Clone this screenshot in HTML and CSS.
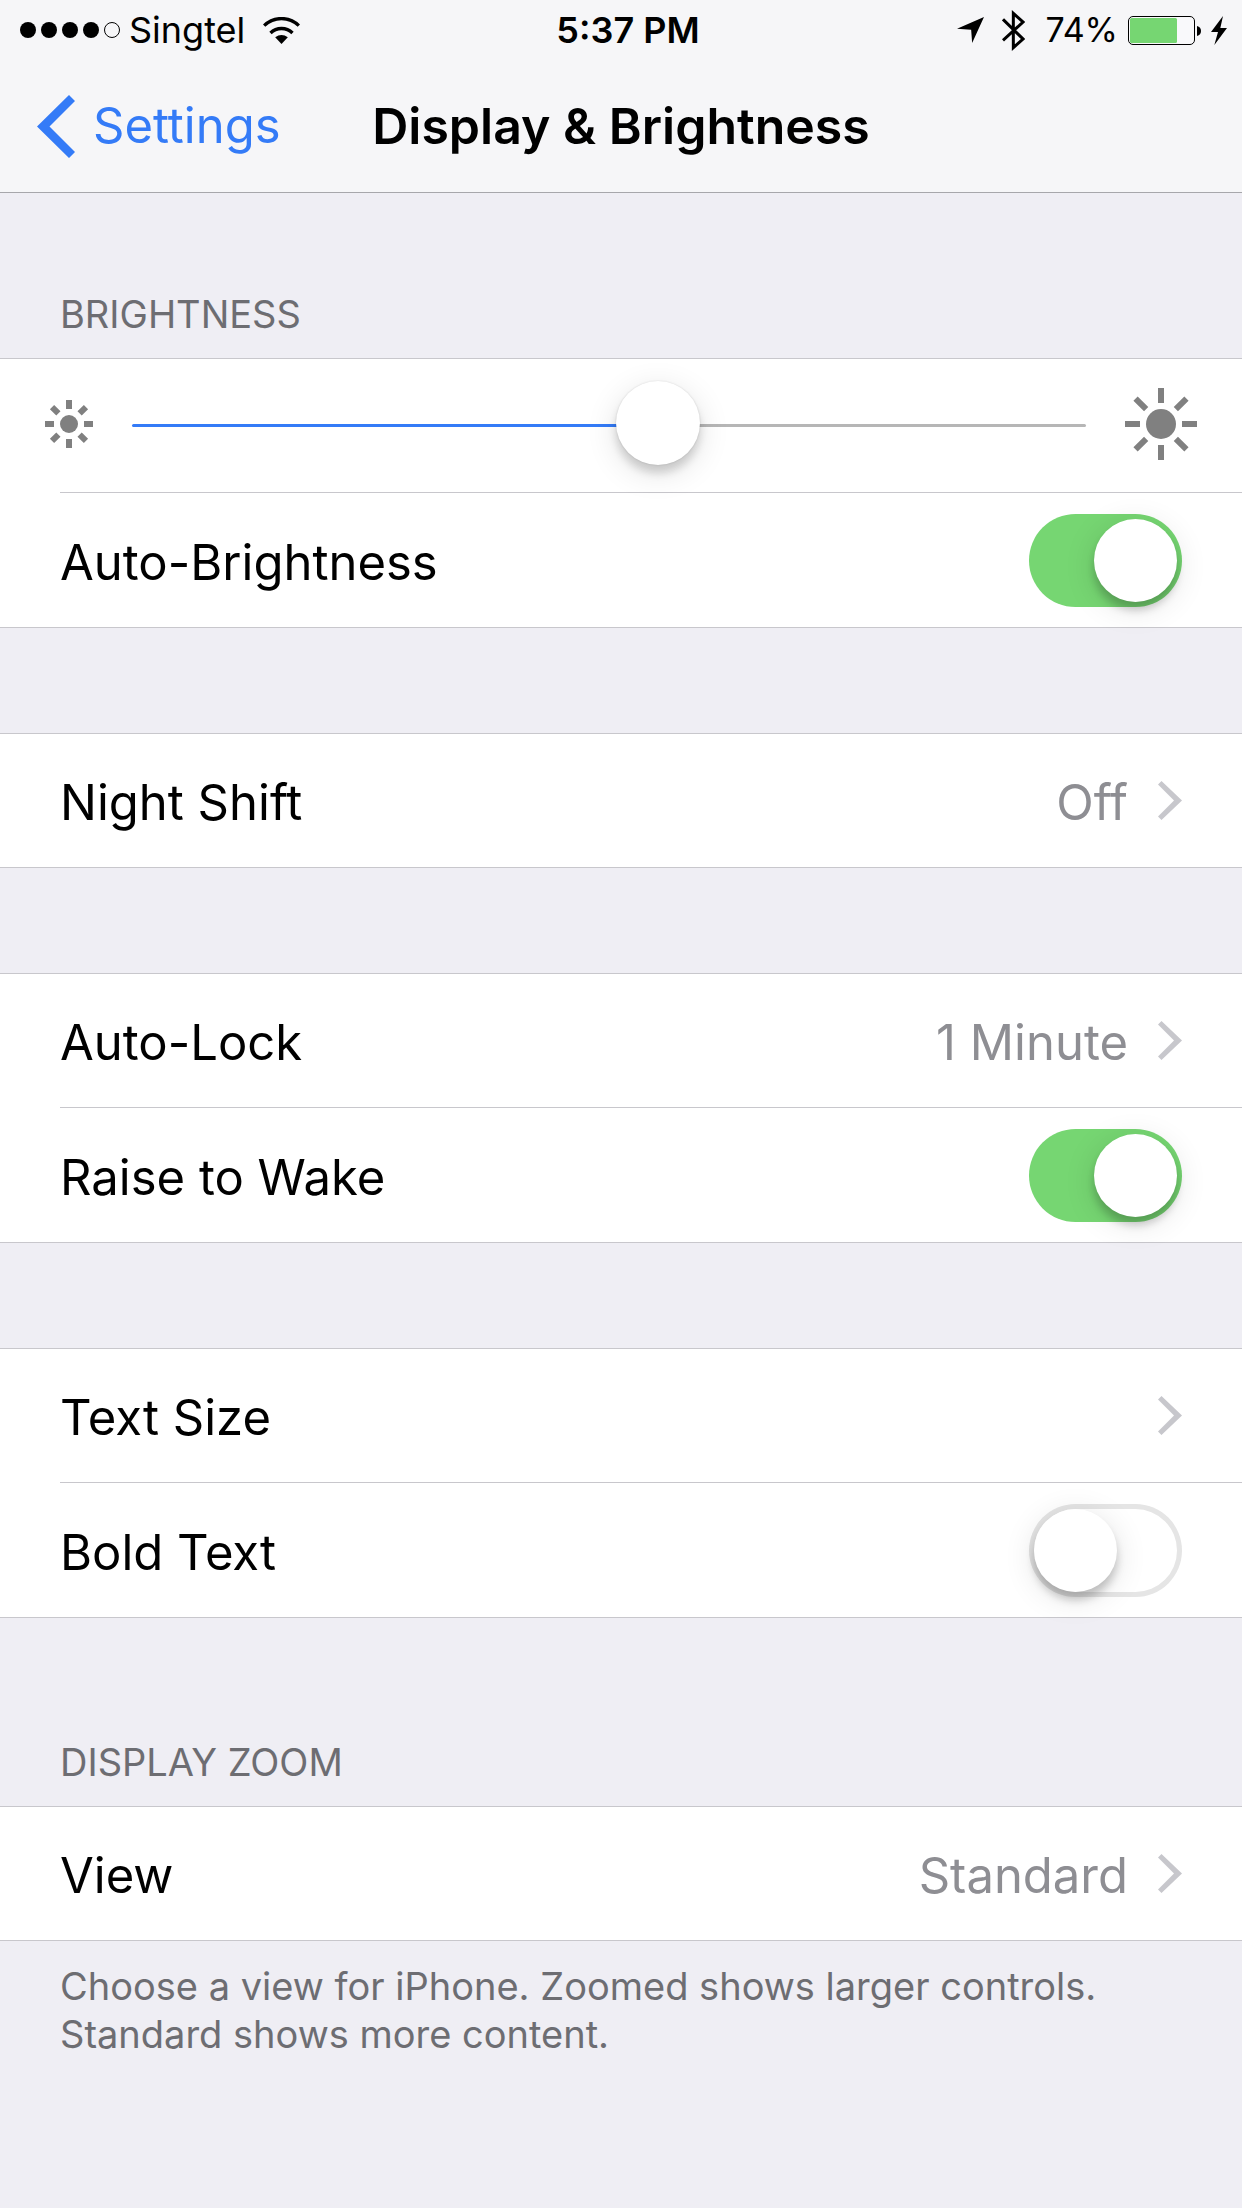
FILE: index.html
```html
<!DOCTYPE html>
<html lang="en">
<head>
  <meta charset="utf-8">
  <meta name="viewport" content="width=device-width, initial-scale=1">
  <title>Display &amp; Brightness</title>
  <link rel="stylesheet" href="styles.css">
</head>
<body>
  <svg width="0" height="0" class="symbols" aria-hidden="true">
    <symbol id="chevron" viewBox="0 0 24 39">
      <path d="M3.5 0L24 19.5L3.5 39L0 35.5L16 19.5L0 3.5Z"/>
    </symbol>
  </svg>

  <header class="header">
    <div class="status">
      <div class="status-left">
        <span class="signal" role="img" aria-label="Signal: 4 of 5">
          <i class="dot"></i><i class="dot"></i><i class="dot"></i><i class="dot"></i><i class="dot dot-empty"></i>
        </span>
        <span class="carrier">Singtel</span>
        <svg class="wifi" viewBox="0 0 110 81" width="37" height="27" aria-hidden="true">
          <g fill="none" stroke="#000" stroke-width="10">
            <path d="M3 26A74 74 0 0 1 107 26"/>
            <path d="M22 48A47 47 0 0 1 88 48"/>
          </g>
          <path d="M36 61Q55 47 74 61L55 81Z"/>
        </svg>
      </div>
      <time class="clock">5:37 PM</time>
      <div class="status-right">
        <svg class="location" viewBox="0 0 82 79" width="27" height="26" aria-hidden="true">
          <path d="M0 36L82 0L46 79L43 39Z"/>
        </svg>
        <svg class="bluetooth" viewBox="0 0 69 123" width="23" height="41" aria-hidden="true">
          <path d="M3 28L63 87L34 113V10L63 36L3 91" fill="none" stroke="#000" stroke-width="9"/>
        </svg>
        <span class="percent">74%</span>
        <svg class="battery" viewBox="0 0 73 29" width="73" height="29" aria-hidden="true">
          <rect x="0.5" y="0.5" width="66" height="28" rx="4.5" fill="#fff" fill-opacity="0.4" stroke="#000"/>
          <rect x="2" y="2" width="47" height="25" rx="1.5" fill="#76d672"/>
          <path d="M69 10Q73 11 73 15T69 20Z"/>
        </svg>
        <svg class="bolt" viewBox="0 0 48 87" width="16" height="29" aria-hidden="true">
          <path d="M36 0L0 48H21L10 87L48 36H28Z"/>
        </svg>
      </div>
    </div>
    <nav class="nav">
      <a class="back" href="#settings">
        <svg viewBox="0 0 38 63" width="38" height="63" aria-hidden="true">
          <path d="M32 0L38 6L12.5 31.5L38 57L32 63L0 31.5Z" fill="currentColor"/>
        </svg>
        Settings
      </a>
      <h1 class="title">Display &amp; Brightness</h1>
    </nav>
  </header>

  <main class="content">
    <section class="section">
      <h2 class="section-title">BRIGHTNESS</h2>
      <ul class="list">
        <li class="item item-wide">
          <div class="row slider-row">
            <svg class="sun" viewBox="-24 -24 48 48" width="48" height="48" aria-hidden="true">
              <circle r="9"/>
              <path d="M-3 -24H3V-15H-3ZM-3 15H3V24H-3ZM-24 -3H-15V3H-24ZM15 -3H24V3H15Z"/>
              <path transform="rotate(45)" d="M-3 -24H3V-15H-3ZM-3 15H3V24H-3ZM-24 -3H-15V3H-24ZM15 -3H24V3H15Z"/>
            </svg>
            <input class="slider" type="range" min="0" max="1000" value="556" aria-label="Brightness" style="--fill: 55%">
            <svg class="sun" viewBox="-36 -36 72 72" width="72" height="72" aria-hidden="true">
              <circle r="15"/>
              <path d="M-3 -36H3V-21H-3ZM-3 21H3V36H-3ZM-36 -3H-21V3H-36ZM21 -3H36V3H21Z"/>
              <path transform="rotate(45)" d="M-3 -36H3V-21H-3ZM-3 21H3V36H-3ZM-36 -3H-21V3H-36ZM21 -3H36V3H21Z"/>
            </svg>
          </div>
        </li>
        <li class="item">
          <label class="row"><span class="label">Auto-Brightness</span><input class="switch" type="checkbox" role="switch" checked></label>
        </li>
      </ul>
    </section>

    <section class="section">
      <ul class="list">
        <li class="item">
          <a class="row" href="#night-shift"><span class="label">Night Shift</span><span class="value">Off</span><svg class="chevron" width="24" height="39" aria-hidden="true"><use href="#chevron"/></svg></a>
        </li>
      </ul>
    </section>

    <section class="section">
      <ul class="list">
        <li class="item">
          <a class="row" href="#auto-lock"><span class="label">Auto-Lock</span><span class="value">1 Minute</span><svg class="chevron" width="24" height="39" aria-hidden="true"><use href="#chevron"/></svg></a>
        </li>
        <li class="item">
          <label class="row"><span class="label">Raise to Wake</span><input class="switch" type="checkbox" role="switch" checked></label>
        </li>
      </ul>
    </section>

    <section class="section">
      <ul class="list">
        <li class="item">
          <a class="row" href="#text-size"><span class="label">Text Size</span><svg class="chevron" width="24" height="39" aria-hidden="true"><use href="#chevron"/></svg></a>
        </li>
        <li class="item">
          <label class="row"><span class="label">Bold Text</span><input class="switch" type="checkbox" role="switch"></label>
        </li>
      </ul>
    </section>

    <section class="section section-zoom">
      <h2 class="section-title">DISPLAY ZOOM</h2>
      <ul class="list">
        <li class="item">
          <a class="row" href="#view"><span class="label">View</span><span class="value">Standard</span><svg class="chevron" width="24" height="39" aria-hidden="true"><use href="#chevron"/></svg></a>
        </li>
      </ul>
      <p class="footnote">Choose a view for iPhone. Zoomed shows larger controls. Standard shows more content.</p>
    </section>
  </main>
</body>
</html>
```
FILE: styles.css
```css
* {
  box-sizing: border-box;
}

body {
  margin: 0;
  min-height: 100vh;
  background: #efeef4;
  color: #000;
  font-family: Inter, "Liberation Sans", sans-serif;
  font-size: 49px;
  line-height: 60px;
}

a {
  color: inherit;
  text-decoration: none;
}

.symbols {
  position: absolute;
}

/* Header */

.header {
  background: #f6f6f8;
  border-bottom: 1px solid #a7a7ab;
}

.status {
  display: grid;
  grid-template-columns: 1fr auto 1fr;
  align-items: center;
  height: 60px;
  padding: 0 0 0 14px;
  font-size: 36px;
}

.status-left,
.status-right {
  display: flex;
  align-items: center;
}

.status-left {
  padding-left: 6px;
}

.status-right {
  justify-content: flex-end;
  padding-right: 15px;
}

.signal {
  display: flex;
  gap: 5px;
  margin-right: 9px;
}

.dot {
  width: 16px;
  height: 16px;
  border-radius: 50%;
  background: #000;
}

.dot-empty {
  background: none;
  border: 1px solid #000;
}

.wifi {
  margin-left: 18px;
}

.clock {
  font-weight: 600;
}

.location {
  margin-right: 18px;
}

.bluetooth {
  margin-right: 20px;
}

.percent {
  margin-right: 10px;
  font-size: 34px;
}

.bolt {
  margin-left: 10px;
}

.nav {
  display: grid;
  grid-template-columns: 1fr auto 1fr;
  align-items: center;
  height: 132px;
  padding: 0 37px;
}

.back {
  display: flex;
  align-items: center;
  gap: 18px;
  color: #347bf7;
}

.title {
  margin: 0;
  font-size: 50px;
  font-weight: 600;
}

/* Grouped lists */

.content {
  padding-bottom: 60px;
}

.section {
  padding-top: 105px;
}

.section:first-child {
  padding-top: 97px;
}

.section-zoom {
  padding-top: 120px;
}

.section-title {
  margin: 0;
  padding: 0 60px 20px;
  color: #6d6d72;
  font-size: 38px;
  font-weight: 400;
  line-height: 48px;
}

.list {
  margin: 0;
  padding: 0;
  list-style: none;
  background: #fff;
  border: solid #c8c7cc;
  border-width: 1px 0;
}

.item {
  padding-left: 60px;
}

.item-wide {
  padding-left: 0;
}

.row {
  display: flex;
  align-items: center;
  min-height: 133px;
  padding-right: 60px;
}

.item + .item .row {
  min-height: 135px;
  border-top: 1px solid #c8c7cc;
}

.label {
  flex: 1;
  padding-top: 5px;
}

.value {
  padding-top: 5px;
  color: #8e8e93;
}

.chevron {
  margin-left: 30px;
  fill: #c7c7cc;
}

.footnote {
  margin: 0;
  padding: 21px 60px 0;
  color: #6d6d72;
  font-size: 38px;
  line-height: 48px;
}

/* Brightness slider */

.slider-row {
  gap: 39px;
  padding: 0 45px;
}

.sun {
  flex: none;
  margin-bottom: 3px;
  fill: #808080;
}

.slider {
  flex: 1;
  min-width: 0;
  height: 84px;
  margin: 0;
  appearance: none;
  background: none;
}

.slider::-webkit-slider-runnable-track {
  height: 3px;
  border-radius: 2px;
  background: linear-gradient(to right, #347bf7 var(--fill), #b6b6b6 var(--fill));
}

.slider::-webkit-slider-thumb {
  appearance: none;
  width: 84px;
  height: 84px;
  margin-top: -43px;
  border-radius: 50%;
  background: #fff;
  box-shadow: 0 0 2px rgba(0, 0, 0, 0.14), 0 8px 9px rgba(0, 0, 0, 0.15), 0 8px 32px rgba(0, 0, 0, 0.12);
}

/* Switch */

.switch {
  flex: none;
  width: 153px;
  height: 93px;
  margin: 0;
  padding: 5px;
  appearance: none;
  border-radius: 47px;
  background: #fff;
  box-shadow: inset 0 0 0 5px #e5e5e5;
}

.switch::before {
  content: "";
  display: block;
  width: 83px;
  height: 83px;
  border-radius: 50%;
  background: #fff;
  box-shadow: 0 8px 9px rgba(0, 0, 0, 0.2), 0 6px 32px rgba(0, 0, 0, 0.12);
}

.switch:checked {
  background: #76d672;
  box-shadow: none;
}

.switch:checked::before {
  margin-left: auto;
}
```
